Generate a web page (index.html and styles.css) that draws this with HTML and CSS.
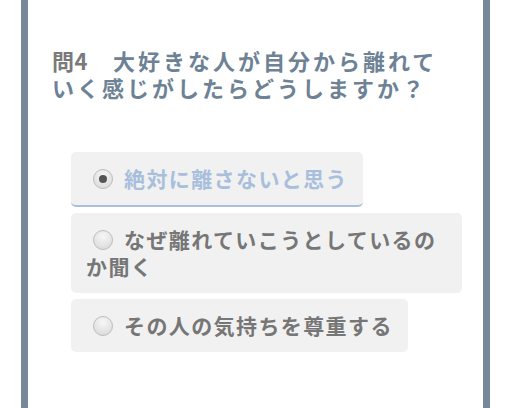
FILE: index.html
```html
<!DOCTYPE html>
<html lang="ja">
<head>
<meta charset="utf-8">
<link rel="stylesheet" href="styles.css">
</head>
<body>
<div class="frame">
  <h2 class="question"><span class="qnum">問4</span>　大好きな人が自分から離れていく感じがしたらどうしますか？</h2>
  <ul class="options">
    <li class="option selected"><span class="radio checked"></span>絶対に離さないと思う</li>
    <li class="option"><span class="radio"></span>なぜ離れていこうとしているのか聞く</li>
    <li class="option"><span class="radio"></span>その人の気持ちを尊重する</li>
  </ul>
</div>
</body>
</html>
```
FILE: styles.css
```css
html, body {
  margin: 0;
  padding: 0;
  background: #ffffff;
}
body {
  font-family: "Noto Sans CJK JP", "Noto Sans", sans-serif;
  height: 408px;
  overflow: hidden;
}
.frame {
  margin-left: 21px;
  width: 469px;
  height: 408px;
  border-left: 7px solid #778899;
  border-right: 7px solid #778899;
  box-sizing: border-box;
  padding-top: 47px;
}
.question {
  margin: 0 30px 0 24px;
  font-size: 22px;
  line-height: 27px;
  font-weight: bold;
  letter-spacing: 3px;
  color: #6e8296;
}
.qnum {
  color: #7a7a7a;
  letter-spacing: 0.5px;
}
.options {
  list-style: none;
  margin: 51px 0 0 43px;
  padding: 0;
  display: flex;
  flex-direction: column;
  align-items: flex-start;
  gap: 6px;
  max-width: 391px;
}
.option {
  box-sizing: border-box;
  background: #f1f1f1;
  border-radius: 5px;
  padding: 13px 15px;
  font-size: 21px;
  line-height: 27px;
  font-weight: bold;
  letter-spacing: 1.4px;
  color: #767676;
}
.option.selected {
  color: #a8bfdc;
  border-bottom: 2px solid #a9c0da;
}
.radio {
  display: inline-block;
  box-sizing: border-box;
  width: 20px;
  height: 20px;
  border-radius: 50%;
  border: 1px solid #bdbdbd;
  background: radial-gradient(circle at 50% 30%, #f7f7f7 0%, #d6d6d6 100%);
  margin: 0 11px 0 7px;
  vertical-align: -2px;
  position: relative;
}
.radio.checked::after {
  content: "";
  position: absolute;
  left: 5px;
  top: 5px;
  width: 8px;
  height: 8px;
  border-radius: 50%;
  background: #555555;
}
```
